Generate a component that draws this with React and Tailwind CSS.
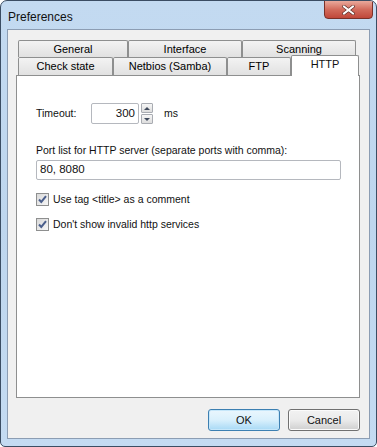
import React from "react";

const Tab = ({ label, w }) => (
  <div
    className={`${w} h-full flex items-center justify-center border border-b-0 border-[#8e8f8f] rounded-t-[2px] bg-gradient-to-b from-[#f3f3f3] to-[#e1e1e1] text-black`}
  >
    {label}
  </div>
);

const Check = ({ label }) => (
  <div className="flex items-center h-[13px]">
    <div className="w-[13px] h-[13px] border border-[#8e8f8f] bg-gradient-to-br from-[#d9d9d9] to-[#f7f7f7] flex items-center justify-center">
      <svg width="11" height="11" viewBox="0 0 11 11">
        <path d="M2 5.5 L4.3 8 L9 2.2" stroke="#4b5f8c" strokeWidth="2" fill="none" />
      </svg>
    </div>
    <span className="ml-[4px]">{label}</span>
  </div>
);

export default function App() {
  return (
    <div
      className="w-[377px] h-[447px] flex flex-col border border-[#3b4d63] rounded-t-[7px] rounded-b-[5px] bg-gradient-to-b from-[#c3daf1] via-[#bed6ee] to-[#c4dbf2] text-[11px] text-[#111] overflow-hidden"
      style={{ fontFamily: '"Liberation Sans", Arial, sans-serif' }}
    >
      {/* title bar */}
      <div className="h-[28px] flex items-start justify-between pl-[7px] pr-[3px] shrink-0">
        <span className="mt-[7px] text-[12px]">Preferences</span>
        <div className="w-[49px] h-[19px] -mt-px rounded-b-[4px] border border-[#7a3129] bg-gradient-to-b from-[#e9a99c] via-[#d26b5c] to-[#c0473a] flex items-center justify-center">
          <svg width="13" height="10" viewBox="0 0 13 10">
            <path d="M2 1.5 L11 8.5 M11 1.5 L2 8.5" stroke="#5a2a24" strokeWidth="3.4" strokeLinecap="square" />
            <path d="M2 1.5 L11 8.5 M11 1.5 L2 8.5" stroke="#ffffff" strokeWidth="2" strokeLinecap="square" />
          </svg>
        </div>
      </div>

      {/* client area */}
      <div className="ml-[6px] w-[363px] h-[410px] border border-[#8c9db3] bg-[#f0f0f0] flex flex-col pl-[8px] pr-[9px] pt-[10px] pb-[7px]">
        {/* tabs */}
        <div className="flex flex-col pl-[2px]">
          <div className="flex h-[17px]">
            <Tab label="General" w="w-[110px]" />
            <Tab label="Interface" w="w-[114px]" />
            <Tab label="Scanning" w="w-[114px]" />
          </div>
          <div className="flex h-[18px] items-end">
            <Tab label="Check state" w="w-[95px]" />
            <Tab label="Netbios (Samba)" w="w-[114px]" />
            <Tab label="FTP" w="w-[64px]" />
            <div className="relative z-10 w-[68px] h-[21px] -mb-px pb-[4px] border border-b-0 border-[#8e8f8f] rounded-t-[2px] bg-white flex items-center justify-center">
              HTTP
            </div>
          </div>
        </div>

        {/* panel */}
        <div className="flex-1 border border-[#8e8f8f] bg-white pl-[19px] pt-[27px] flex flex-col text-[10.5px]">
          <div className="flex items-center h-[21px]">
            <span className="w-[55px]">Timeout:</span>
            <div className="w-[48px] h-[21px] border border-[#b5b8be] rounded-[2px] flex items-center justify-end pr-[3px] text-[11.5px]">
              300
            </div>
            <div className="ml-[2px] w-[12px] h-[21px] flex flex-col gap-px">
              <div className="h-[10px] border border-[#a9acb2] rounded-[1px] bg-gradient-to-b from-[#f6f6f6] to-[#dddddd] flex items-center justify-center">
                <svg width="6" height="3" viewBox="0 0 6 3"><path d="M0 3 L3 0 L6 3 Z" fill="#404a5c" /></svg>
              </div>
              <div className="h-[10px] border border-[#a9acb2] rounded-[1px] bg-gradient-to-b from-[#f6f6f6] to-[#dddddd] flex items-center justify-center">
                <svg width="6" height="3" viewBox="0 0 6 3"><path d="M0 0 L3 3 L6 0 Z" fill="#404a5c" /></svg>
              </div>
            </div>
            <span className="ml-[11px]">ms</span>
          </div>

          <div className="mt-[20px] leading-[13px]">Port list for HTTP server (separate ports with comma):</div>
          <div className="mt-[3px] w-[305px] h-[20px] border border-[#b5b8be] rounded-[2px] flex items-center pl-[3px] text-[11.5px]">
            80, 8080
          </div>

          <div className="mt-[13px] flex flex-col gap-[12px]">
            <Check label="Use tag <title> as a comment" />
            <Check label="Don't show invalid http services" />
          </div>
        </div>

        {/* buttons */}
        <div className="mt-[11px] flex justify-end gap-[8px]">
          <button className="w-[72px] h-[22px] rounded-[3px] border border-[#3c7fb1] bg-gradient-to-b from-[#eaf6fd] via-[#d9f0fc] to-[#a7d9f5] shadow-[inset_0_0_0_1px_#c6e7fa] text-[11px]">
            OK
          </button>
          <button className="w-[72px] h-[22px] rounded-[3px] border border-[#707070] bg-gradient-to-b from-[#f2f2f2] via-[#ebebeb] to-[#cfcfcf] shadow-[inset_0_0_0_1px_#fbfbfb] text-[11px]">
            Cancel
          </button>
        </div>
      </div>
    </div>
  );
}
